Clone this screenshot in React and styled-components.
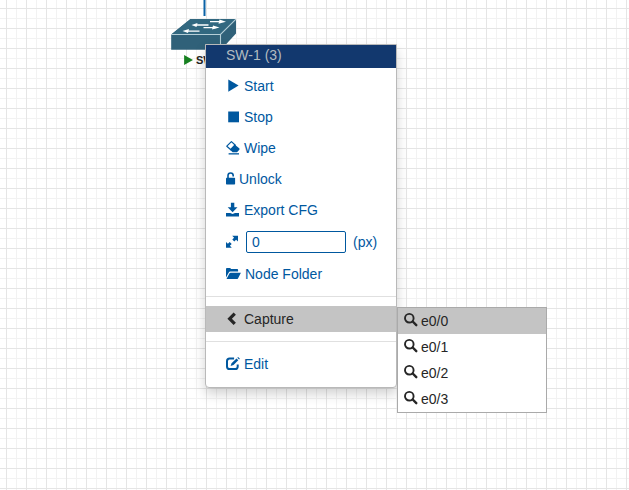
import React from "react";
import styled, { createGlobalStyle, css } from "styled-components";

const BLUE = "#00589f";

const GlobalStyle = createGlobalStyle`
  *, *::before, *::after { box-sizing: border-box; }
  body {
    margin: 0;
    font-family: "Liberation Sans", Arial, sans-serif;
    font-size: 14px;
    line-height: 20px;
  }
`;

const Canvas = styled.main`
  position: relative;
  width: 629px;
  height: 490px;
  overflow: hidden;
  background-color: #fff;
  background-image:
    linear-gradient(90deg, #e5e5e5 1px, transparent 1px),
    linear-gradient(#e5e5e5 1px, transparent 1px),
    linear-gradient(90deg, #f2f2f2 1px, transparent 1px),
    linear-gradient(#f2f2f2 1px, transparent 1px);
  background-size: 20px 20px, 20px 20px, 10px 10px, 10px 10px;
  background-position: 6px 8px;
`;

const Node = styled.div`
  position: absolute;
  left: 171px;
  top: 0;
  width: 66px;
`;

const NodeDrawing = styled.svg`
  display: block;
`;

const NodeLabel = styled.div`
  display: flex;
  align-items: center;
  gap: 3px;
  height: 16px;
  margin-top: 1px;
  padding-left: 13px;
  color: #222;
  font-size: 11px;
  font-weight: bold;
  white-space: nowrap;
`;

const ContextMenu = styled.nav`
  position: absolute;
  left: 205px;
  top: 44px;
  width: 192px;
  height: 344px;
  background: #fff;
  border: 1px solid #b9b9b9;
  border-radius: 0 0 4px 4px;
  box-shadow: 0 6px 12px rgba(0, 0, 0, 0.18);
`;

const MenuHeader = styled.div`
  height: 23px;
  padding-left: 20px;
  background: #12386e;
  color: #b3bcc0;
  line-height: 21px;
`;

const MenuList = styled.ul`
  margin: 0;
  padding: 2px 0 0;
  list-style: none;
`;

const MenuItem = styled.li`
  display: flex;
  align-items: center;
  height: ${(p) => p.$height || 31}px;
  padding-left: 20px;
  color: ${BLUE};
  ${(p) =>
    p.$active &&
    css`
      background: #c4c4c4;
      color: #262626;
    `}
`;

const IconSlot = styled.span`
  flex: none;
  width: ${(p) => p.$width || 18}px;
  height: 14px;
`;

const Glyph = styled.svg`
  display: block;
  overflow: visible;
`;

const Divider = styled.li`
  height: 1px;
  margin: ${(p) => (p.$tight ? 7 : 9)}px 0 9px;
  background: #e0e0e0;
`;

const SizeInput = styled.input`
  width: 100px;
  height: 22px;
  margin: 0 7px 0 2px;
  padding: 0 5px;
  border: 1px solid ${BLUE};
  border-radius: 2px;
  background: #fff;
  color: ${BLUE};
  font: inherit;
  outline: none;
`;

const Submenu = styled.ul`
  position: absolute;
  left: 397px;
  top: 307px;
  width: 150px;
  height: 106px;
  margin: 0;
  padding: 0;
  list-style: none;
  background: #fff;
  border: 1px solid #aaa;
`;

const SubmenuItem = styled.li`
  display: flex;
  align-items: center;
  height: 26px;
  padding: 0 0 2px 6px;
  color: #262626;
  background: ${(p) => (p.$active ? "#c4c4c4" : "transparent")};
`;

const SubmenuText = styled.span`
  padding-top: 2px;
`;

const glyphs = {
  play: <path d="M2.3.5 12.6 6.6 2.3 12.8z" />,
  stop: <path d="M2.2 1.5h10.8v10.8H2.2z" />,
  erase: (
    <>
      <path d="M5.4.6 9.4 4.2 4.8 8.8.8 5.2z" fill="none" stroke="currentColor" strokeWidth="1.2" strokeLinejoin="round" />
      <path d="M8.6 3.4 13.2 7.2Q14 8 13.3 8.8L11.5 10.8Q11 11.3 10.3 11.3H7.2Q6.6 11.3 6.1 10.8L3.8 8.6z" />
      <path d="M2.6 12.2H13v1.3H2.6z" />
    </>
  ),
  unlock: (
    <>
      <path d="M2 7V3.6a2.6 2.6 0 0 1 5.2 0v.9" fill="none" stroke="currentColor" strokeWidth="1.6" />
      <rect x="0" y="5.7" width="9.1" height="6.8" rx=".7" />
    </>
  ),
  save: <path d="M4.9-.3h3.4v4.5h3.2L6.6 9.3 1.7 4.2h3.2zM0 9.9h4.2l2.4 1.2L9 9.9h4v3.6H0z" />,
  resize: (
    <>
      <path d="M6.2.8H12v5.8L10.1 4.7 8.3 6.5 6.3 4.5 8.1 2.7zM0 6.9l1.9 1.9 1.8-1.8 2 2-1.8 1.8 1.9 1.9H0z" />
    </>
  ),
  folder: (
    <>
      <path d="M0 10.6V1.9Q0 1 .9 1H3.8Q4.7 1 5 2h6.2q.9 0 .9.9v1.7H4.4Q3.2 4.6 2.5 5.9z" />
      <path d="M4.7 5.7h10.2l-2.9 5.7q-.4.7-1.2.7H.5L3.4 6.5q.4-.8 1.3-.8z" />
    </>
  ),
  chevron: <path d="M7.6.6 9.9 2.8 5.9 6.8l4 4-2.3 2.3L1.4 6.8z" />,
  edit: (
    <>
      <path d="M8.1 1.5H3.7Q1 1.5 1 4.2v5.2q0 2.6 2.7 2.6h5.4q2.6 0 2.6-2.6V7.6" fill="none" stroke="currentColor" strokeWidth="2" />
      <path d="M10.5 1.5 12.3 3.3 7.5 8.1 4.6 9 5.5 6.2zM11.3.7 12.1-.1 13.9 1.7 13.1 2.5z" />
    </>
  ),
  search: (
    <>
      <circle cx="5.3" cy="5.2" r="4.3" fill="none" stroke="currentColor" strokeWidth="1.9" />
      <path d="m8.7 8.5 3.6 3.7" fill="none" stroke="currentColor" strokeWidth="2.4" strokeLinecap="round" />
    </>
  ),
};

function Icon({ name, width }) {
  return (
    <IconSlot $width={width}>
      <Glyph width="14" height="14" viewBox="0 0 14 14" fill="currentColor" aria-hidden="true">
        {glyphs[name]}
      </Glyph>
    </IconSlot>
  );
}

function SwitchNode() {
  return (
    <Node>
      <NodeDrawing width="66" height="51" viewBox="171 0 66 51">
        <path d="M204.5 0v16" stroke="#0b62a6" strokeWidth="2" />
        <path d="M171.2 34.5 190.5 19H236v14.5L221 49.7H171.2z" fill="#306179" />
        <path d="M171.2 34.5 190.5 19H236l-15.5 15.5z" fill="#326880" />
        <path d="M171.2 34.5h49.3L236 19.2M220.5 34.5v15.2" fill="none" stroke="#b5ced7" strokeWidth="1.1" />
        <path d="M210 21.7h11M195 25h13.5M203.5 27.6h12M187 31.1h12.5" stroke="#fff" strokeWidth="1.3" />
        <path d="m219.5 19.6 6.5 2.1-7.5 2zM197.5 23l-6 2 5 2zM213 25.5l6.5 2.1-7.5 2zM189 29l-6.5 2.1 5.5 2z" fill="#fff" />
      </NodeDrawing>
      <NodeLabel>
        <svg width="9" height="10" viewBox="0 0 9 10">
          <path d="M.1 0 9 5 .1 10z" fill="#168020" />
        </svg>
        SW-1
      </NodeLabel>
    </Node>
  );
}

export default function App() {
  return (
    <>
      <GlobalStyle />
      <Canvas>
        <SwitchNode />
        <ContextMenu>
          <MenuHeader>SW-1 (3)</MenuHeader>
          <MenuList>
            <MenuItem><Icon name="play" />Start</MenuItem>
            <MenuItem><Icon name="stop" />Stop</MenuItem>
            <MenuItem><Icon name="erase" />Wipe</MenuItem>
            <MenuItem><Icon name="unlock" width={13} />Unlock</MenuItem>
            <MenuItem><Icon name="save" />Export CFG</MenuItem>
            <MenuItem $height={33}>
              <Icon name="resize" />
              <SizeInput defaultValue="0" aria-label="Node width" />
              (px)
            </MenuItem>
            <MenuItem><Icon name="folder" width={19} />Node Folder</MenuItem>
            <Divider $tight />
            <MenuItem $active $height={26}><Icon name="chevron" />Capture</MenuItem>
            <Divider />
            <MenuItem $height={26}><Icon name="edit" />Edit</MenuItem>
          </MenuList>
        </ContextMenu>
        <Submenu>
          {["e0/0", "e0/1", "e0/2", "e0/3"].map((port, i) => (
            <SubmenuItem key={port} $active={i === 0}>
              <Icon name="search" width={17} />
              <SubmenuText>{port}</SubmenuText>
            </SubmenuItem>
          ))}
        </Submenu>
      </Canvas>
    </>
  );
}
